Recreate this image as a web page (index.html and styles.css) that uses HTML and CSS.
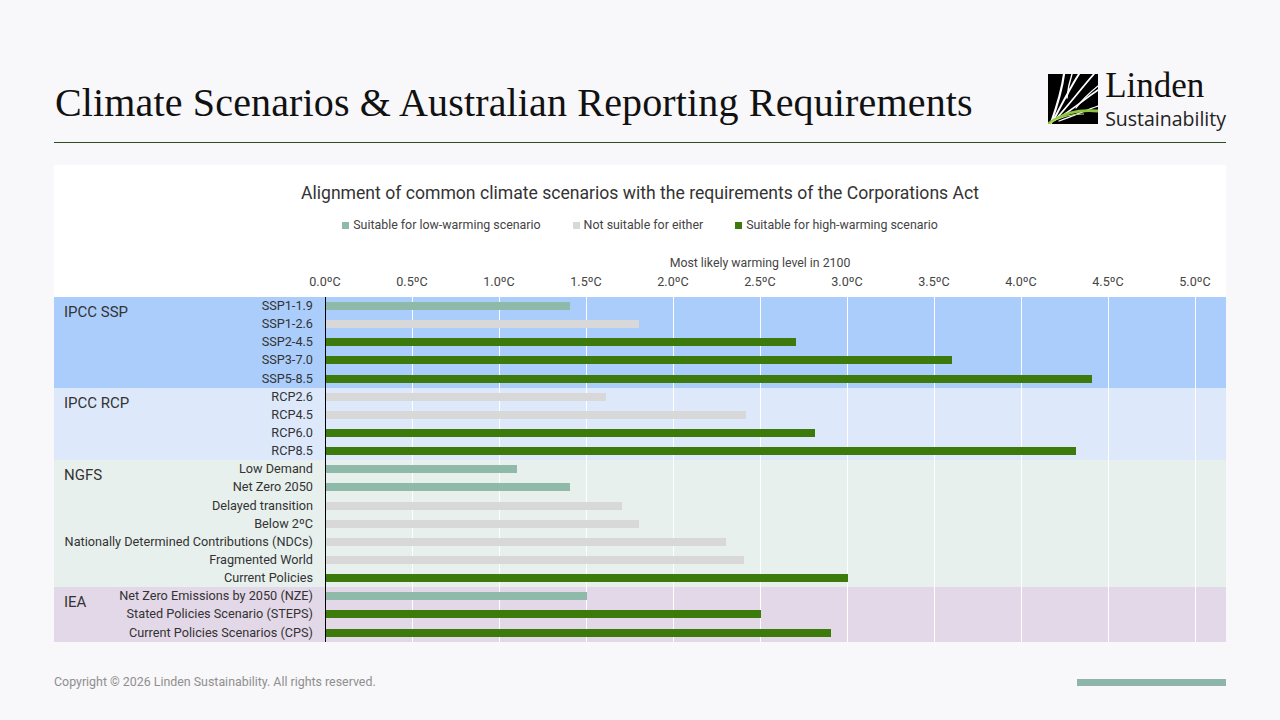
FILE: index.html
```html
<!DOCTYPE html>
<html lang="en">
<head>
<meta charset="utf-8">
<title>Climate Scenarios &amp; Australian Reporting Requirements</title>
<link rel="stylesheet" href="styles.css">
</head>
<body>
<div class="slide">
  <header class="header">
    <h1 class="title">Climate Scenarios &amp; Australian Reporting Requirements</h1>
    <div class="logo">
      <svg class="logo-mark" width="50" height="50" viewBox="0 0 50 50">
        <rect width="50" height="50" fill="#000"/>
        <g fill="none" stroke="#fff" stroke-linecap="round">
          <path d="M3 49 C9 32 14 16 16 0" stroke-width="2.2"/>
          <path d="M5 47 C14 30 22 14 31 0" stroke-width="2"/>
          <path d="M19 24 C20 14 22 6 24 0" stroke-width="1.4"/>
          <path d="M7 46 C20 32 32 16 46 0" stroke-width="1.8"/>
          <path d="M9 45 C24 36 38 24 50 16" stroke-width="1.6"/>
          <path d="M28 34 C34 26 40 20 50 12" stroke-width="1.2"/>
          <path d="M11 47 C26 42 38 36 50 32" stroke-width="1.3"/>
        </g>
        <path d="M0 50 C14 40 28 35 50 37" fill="none" stroke="#8dc63f" stroke-width="2.8"/>
        <path d="M2 49 C12 43 24 40 36 40" fill="none" stroke="#b5dc6e" stroke-width="1.2"/>
      </svg>
      <div class="logo-text">
        <span class="logo-name">Linden</span>
        <span class="logo-sub">Sustainability</span>
      </div>
    </div>
  </header>

  <section class="panel">
    <h2 class="chart-title">Alignment of common climate scenarios with the requirements of the Corporations Act</h2>
    <ul class="legend">
      <li><span class="swatch low"></span>Suitable for low-warming scenario</li>
      <li><span class="swatch none"></span>Not suitable for either</li>
      <li><span class="swatch high"></span>Suitable for high-warming scenario</li>
    </ul>

    <div class="axis-title-row">
      <div class="spacer"></div>
      <div class="axis-title">Most likely warming level in 2100</div>
    </div>
    <div class="axis-row">
      <div class="spacer"></div>
      <div class="ticks">
        <span>0.0ºC</span><span>0.5ºC</span><span>1.0ºC</span><span>1.5ºC</span><span>2.0ºC</span><span>2.5ºC</span><span>3.0ºC</span><span>3.5ºC</span><span>4.0ºC</span><span>4.5ºC</span><span>5.0ºC</span>
      </div>
    </div>

    <div class="chart-body">
      <div class="group ssp">
        <div class="gname">IPCC SSP</div>
        <div class="label">SSP1-1.9</div><div class="plot"><span class="bar low" style="width:243.6px"></span></div>
        <div class="label">SSP1-2.6</div><div class="plot"><span class="bar none" style="width:313.2px"></span></div>
        <div class="label">SSP2-4.5</div><div class="plot"><span class="bar high" style="width:469.8px"></span></div>
        <div class="label">SSP3-7.0</div><div class="plot"><span class="bar high" style="width:626.4px"></span></div>
        <div class="label">SSP5-8.5</div><div class="plot"><span class="bar high" style="width:765.6px"></span></div>
      </div>
      <div class="group rcp">
        <div class="gname">IPCC RCP</div>
        <div class="label">RCP2.6</div><div class="plot"><span class="bar none" style="width:279.9px"></span></div>
        <div class="label">RCP4.5</div><div class="plot"><span class="bar none" style="width:419.5px"></span></div>
        <div class="label">RCP6.0</div><div class="plot"><span class="bar high" style="width:488.5px"></span></div>
        <div class="label">RCP8.5</div><div class="plot"><span class="bar high" style="width:749.8px"></span></div>
      </div>
      <div class="group ngfs">
        <div class="gname">NGFS</div>
        <div class="label">Low Demand</div><div class="plot"><span class="bar low" style="width:191.4px"></span></div>
        <div class="label">Net Zero 2050</div><div class="plot"><span class="bar low" style="width:243.6px"></span></div>
        <div class="label">Delayed transition</div><div class="plot"><span class="bar none" style="width:295.8px"></span></div>
        <div class="label">Below 2ºC</div><div class="plot"><span class="bar none" style="width:313.2px"></span></div>
        <div class="label">Nationally Determined Contributions (NDCs)</div><div class="plot"><span class="bar none" style="width:400.2px"></span></div>
        <div class="label">Fragmented World</div><div class="plot"><span class="bar none" style="width:417.6px"></span></div>
        <div class="label">Current Policies</div><div class="plot"><span class="bar high" style="width:522px"></span></div>
      </div>
      <div class="group iea">
        <div class="gname">IEA</div>
        <div class="label">Net Zero Emissions by 2050 (NZE)</div><div class="plot"><span class="bar low" style="width:261px"></span></div>
        <div class="label">Stated Policies Scenario (STEPS)</div><div class="plot"><span class="bar high" style="width:435px"></span></div>
        <div class="label">Current Policies Scenarios (CPS)</div><div class="plot"><span class="bar high" style="width:504.6px"></span></div>
      </div>
    </div>
  </section>

  <footer class="footer">
    <p class="copyright">Copyright © 2026 Linden Sustainability. All rights reserved.</p>
    <span class="accent"></span>
  </footer>
</div>
</body>
</html>
```

FILE: styles.css
```css
* { box-sizing: border-box; }

html, body {
  margin: 0;
  padding: 0;
}

body {
  width: 1280px;
  height: 720px;
  background: #f8f7fa;
  font-family: Roboto, "Liberation Sans", sans-serif;
  color: #333;
  overflow: hidden;
}

.slide {
  padding: 0 54px;
}

/* Header */
.header {
  display: flex;
  justify-content: space-between;
  align-items: center;
  height: 143px;
  padding-top: 70px;
  padding-bottom: 12px;
  border-bottom: 1px solid #2f4a22;
}

.title {
  margin: 6px 0 0 1px;
  font-family: "Liberation Serif", "DejaVu Serif", serif;
  font-weight: 400;
  font-size: 40px;
  letter-spacing: 0.15px;
  color: #111;
  line-height: 1;
}

.logo {
  display: flex;
  align-items: center;
  gap: 7px;
  margin-top: -3px;
}

.logo-mark {
  display: block;
  flex: none;
}

.logo-text {
  display: flex;
  flex-direction: column;
}

.logo-name {
  font-family: "Liberation Serif", "DejaVu Serif", serif;
  font-size: 35px;
  line-height: 39px;
  color: #111;
}

.logo-sub {
  font-family: "Open Sans", "DejaVu Sans", sans-serif;
  font-size: 19.5px;
  line-height: 27px;
  color: #222;
}

/* Chart panel */
.panel {
  margin-top: 22px;
  background: #fff;
  height: 477px;
  padding-top: 17px;
}

.chart-title {
  margin: 0;
  text-align: center;
  font-weight: 400;
  font-size: 17.6px;
  line-height: 22px;
  color: #333;
}

.legend {
  list-style: none;
  margin: 14px 0 0;
  padding: 0;
  display: flex;
  justify-content: center;
  gap: 32px;
  font-size: 12.4px;
  line-height: 14px;
  color: #444;
}

.legend li {
  display: flex;
  align-items: center;
  gap: 4px;
}

.swatch {
  display: inline-block;
  width: 7px;
  height: 7px;
}

.axis-title-row,
.axis-row {
  display: grid;
  grid-template-columns: 271px 870px;
}

.axis-title-row {
  margin-top: 24px;
}

.axis-title {
  text-align: center;
  font-size: 12.3px;
  line-height: 14px;
  color: #444;
}

.axis-row {
  margin-top: 5px;
  height: 22px;
}

.ticks {
  display: flex;
  margin-left: -43.5px;
}

.ticks span {
  width: 87px;
  flex: none;
  text-align: center;
  font-size: 12.6px;
  line-height: 14px;
  color: #444;
}

/* Chart body */
.chart-body {
  display: flex;
  flex-direction: column;
}

.group {
  display: grid;
  grid-template-columns: 271px 901px;
  grid-auto-rows: 18.15px;
}

.group.ssp { background: #abcdfb; }
.group.rcp { background: #dde9fb; }
.group.ngfs { background: #e7f0ed; }
.group.iea { background: #e3d8e8; }

.gname {
  grid-column: 1;
  grid-row: 1;
  align-self: start;
  justify-self: start;
  padding: 7px 0 0 10px;
  font-size: 15px;
  line-height: 16px;
  color: #333;
  white-space: nowrap;
}

.label {
  grid-column: 1;
  justify-self: end;
  align-self: center;
  padding-right: 12px;
  font-size: 12.7px;
  line-height: 14px;
  color: #333;
  white-space: nowrap;
}

.gname + .label { grid-row: 1; }

.plot {
  grid-column: 2;
  display: flex;
  align-items: center;
  border-left: 1px solid #000;
  background-image: linear-gradient(to right, #fff 0, #fff 1px, transparent 1px);
  background-size: 87px 100%;
  background-position: 86px 0;
  background-repeat: repeat-x;
}

.bar {
  display: block;
  height: 8px;
}

.low { background: #8fbaa9; }
.none { background: #d8d8d8; }
.high { background: #3b7a0b; }

/* Footer */
.footer {
  display: flex;
  justify-content: space-between;
  align-items: center;
  margin-top: 33px;
}

.copyright {
  margin: 0;
  font-size: 12.4px;
  line-height: 14px;
  color: #8f8f8f;
}

.accent {
  display: block;
  width: 149px;
  height: 7px;
  background: #8db5a8;
}
```
